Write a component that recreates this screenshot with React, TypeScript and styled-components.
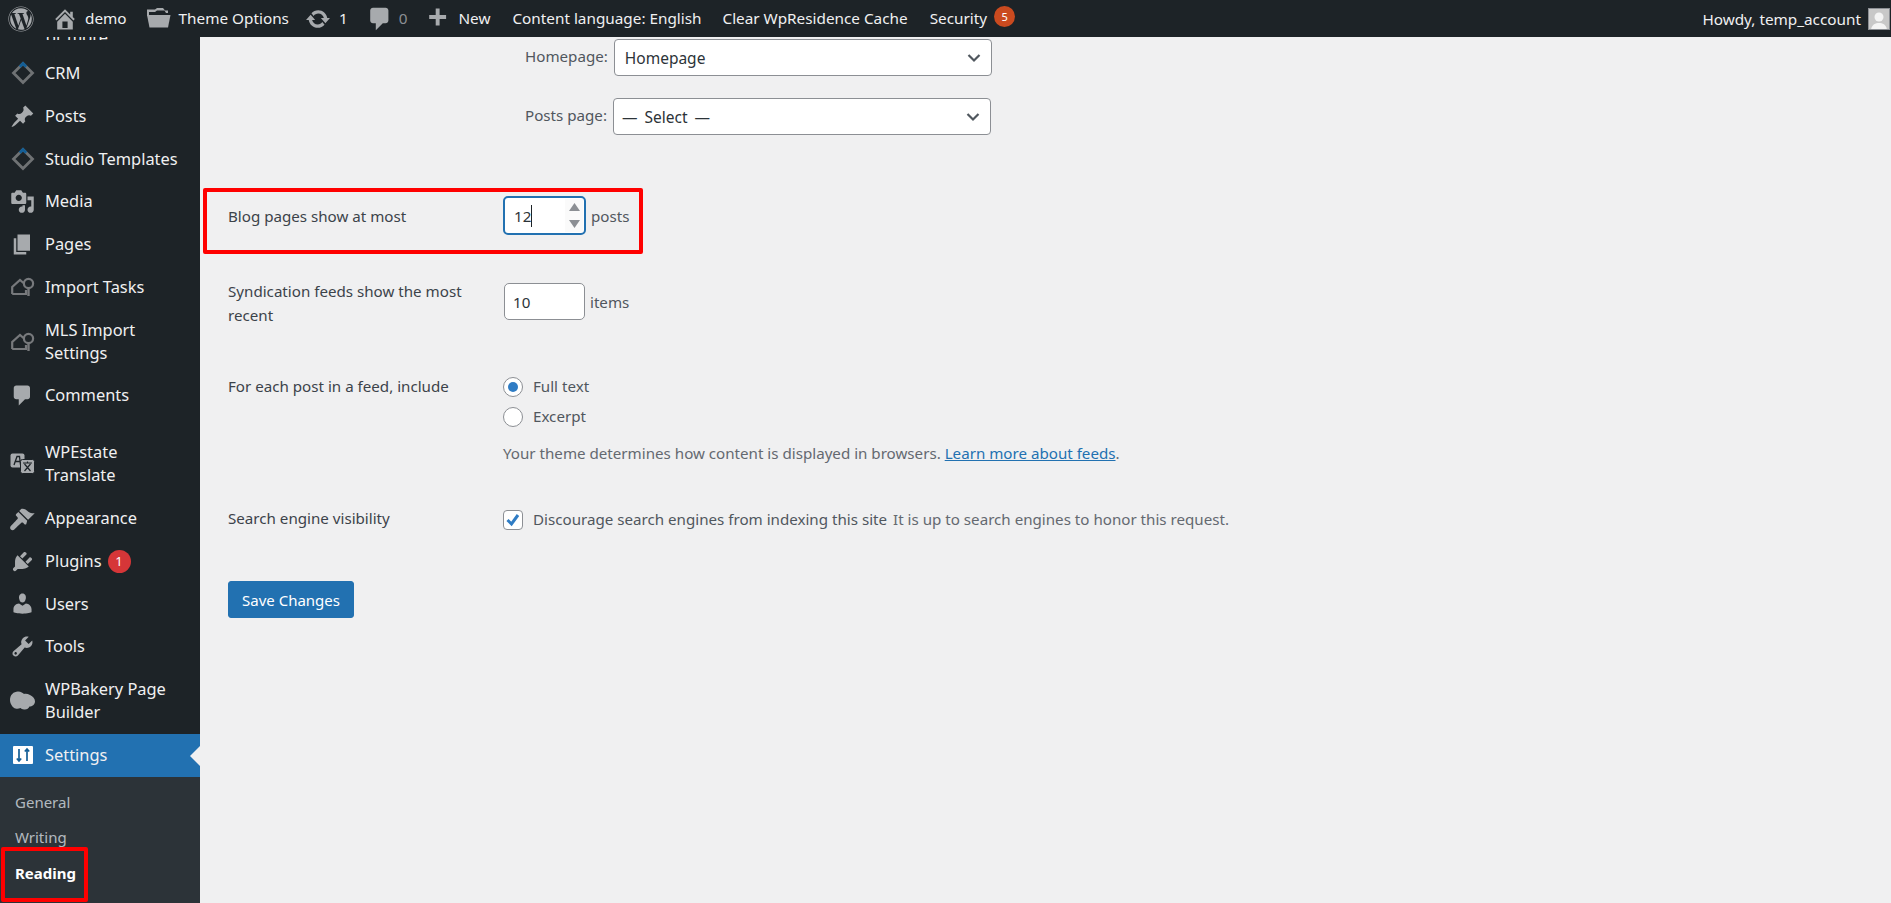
import React from 'react'
import styled, { createGlobalStyle } from 'styled-components'
import { FaWordpress } from 'react-icons/fa'

const GlobalStyle = createGlobalStyle`
  html, body { margin: 0; padding: 0; height: 100%; background: #f0f0f1; }
  body { font-family: 'Noto Sans', 'Open Sans', sans-serif; font-size: 15.15px; color: #2c3338; }
`

const Page = styled.div`
  display: flex;
  flex-direction: column;
  height: 903px;
  overflow: hidden;
`

const TopBar = styled.div`
  display: flex;
  align-items: center;
  flex: 0 0 37px;
  padding: 0 1px 0 8px;
  background: #1d2327;
  color: #f0f0f1;
`

const TopItem = styled.div<{ $gap?: number; $left?: number }>`
  display: flex;
  align-items: center;
  gap: ${({ $gap }) => $gap ?? 0}px;
  margin-left: ${({ $left }) => $left ?? 22}px;
  white-space: nowrap;
  font-size: 15.3px;
  line-height: 37px;
  svg { fill: #a7aaad; display: block; }
`

const MutedCount = styled.span`
  color: #8c8f94;
`

const SecurityBadge = styled.span`
  display: block;
  width: 21px;
  height: 21px;
  margin-top: -5px;
  border-radius: 50%;
  background: #ca4a1f;
  color: #fff;
  font-size: 11px;
  line-height: 21px;
  text-align: center;
`

const Howdy = styled.div`
  display: flex;
  align-items: center;
  gap: 7px;
  margin-left: auto;
  font-size: 15.3px;
  white-space: nowrap;
`

const Avatar = styled.div`
  width: 20px;
  height: 20px;
  border: 1px solid #8c8f94;
  background: #c8c8c8;
  overflow: hidden;
  svg { display: block; fill: #f4f4f4; }
`

const Body = styled.div`
  display: flex;
  flex: 1;
  min-height: 0;
`

const Sidebar = styled.nav`
  flex: 0 0 200px;
  background: #1d2327;
  overflow: hidden;
`

const ClippedItem = styled.div`
  height: 3px;
  margin: 0 0 12px 46px;
  overflow: hidden;
  color: #f0f0f1;
  font-size: 16.4px;
  line-height: 0;
`

const MenuItem = styled.div<{ $active?: boolean; $gapAfter?: number }>`
  display: flex;
  align-items: center;
  position: relative;
  box-sizing: border-box;
  padding: 10px 0;
  margin-bottom: ${({ $gapAfter }) => $gapAfter ?? 0}px;
  background: ${({ $active }) => ($active ? '#2271b1' : 'transparent')};
  color: #f0f0f1;
  font-size: 16.4px;
  line-height: 22.8px;
`

const IconSlot = styled.div`
  flex: 0 0 45px;
  height: 22.8px;
  display: flex;
  align-items: center;
  justify-content: center;
  svg { display: block; flex: none; fill: #a7aaad; }
`

const MenuLabel = styled.div`
  flex: 1;
  display: flex;
  align-items: center;
  gap: 6px;
  padding-right: 14px;
`

const CountBadge = styled.span`
  display: block;
  width: 23px;
  height: 23px;
  border-radius: 50%;
  background: #d63638;
  color: #fff;
  font-size: 13px;
  line-height: 23px;
  text-align: center;
`

const ActiveArrow = styled.span`
  position: absolute;
  right: 0;
  top: 12px;
  border: 10px solid transparent;
  border-right-color: #f0f0f1;
  border-left-width: 0;
`

const Submenu = styled.div`
  background: #2c3338;
  padding-top: 7px;
`

const SubItem = styled.div<{ $current?: boolean }>`
  position: relative;
  height: 35.5px;
  padding-left: 15px;
  color: ${({ $current }) => ($current ? '#fff' : 'rgba(240, 246, 252, 0.7)')};
  font-size: 15px;
  font-weight: ${({ $current }) => ($current ? 700 : 400)};
  line-height: 36px;
`

const Main = styled.main`
  flex: 1;
  min-width: 0;
  padding-left: 28px;
  background: #f0f0f1;
`

const FrontPageList = styled.div`
  display: flex;
  flex-direction: column;
  gap: 22px;
  padding: 2px 0 0 297px;
`

const SelectRow = styled.div`
  display: flex;
  align-items: center;
  gap: 6px;
  color: #50575e;
`

const SelectLabel = styled.span`
  margin-top: -3px;
`

const SelectBox = styled.div`
  display: flex;
  align-items: center;
  justify-content: space-between;
  width: 378px;
  height: 37px;
  box-sizing: border-box;
  padding: 0 9px 0 10px;
  border: 1px solid #8c8f94;
  border-radius: 4px;
  background: #fff;
  color: #2c3338;
  font-size: 15.5px;
  svg { display: block; fill: none; stroke: #50575e; stroke-width: 2.2; }
`

const SelectPlaceholder = styled.span`
  margin-left: -2px;
  word-spacing: 3px;
`

const FormRow = styled.div<{ $top: number }>`
  position: relative;
  display: grid;
  grid-template-columns: 275px 1fr;
  margin-top: ${({ $top }) => $top}px;
`

const RowLabel = styled.div<{ $top?: number }>`
  width: 240px;
  margin-top: -1px;
  padding-top: ${({ $top }) => $top ?? 0}px;
  line-height: 24px;
  color: #3c434a;
`

const RowField = styled.div<{ $top?: number }>`
  padding-top: ${({ $top }) => $top ?? 0}px;
`

const InlineField = styled.div`
  display: flex;
  align-items: center;
  gap: 5px;
  color: #50575e;
`

const NumberBox = styled.div<{ $focused?: boolean }>`
  display: flex;
  align-items: center;
  position: relative;
  width: ${({ $focused }) => ($focused ? 83 : 81)}px;
  height: ${({ $focused }) => ($focused ? 39 : 37)}px;
  margin-left: ${({ $focused }) => ($focused ? 0 : 1)}px;
  box-sizing: border-box;
  padding-left: ${({ $focused }) => ($focused ? 9 : 8)}px;
  border: ${({ $focused }) => ($focused ? '2px solid #2271b1' : '1px solid #8c8f94')};
  border-radius: 5px;
  background: #fff;
  color: #2c3338;
`

const TextCaret = styled.span`
  display: block;
  width: 1px;
  height: 22px;
  background: #1d2327;
`

const Spinner = styled.div`
  position: absolute;
  top: 1px;
  right: 1px;
  bottom: 1px;
  width: 18px;
  display: flex;
  flex-direction: column;
  align-items: center;
  justify-content: space-around;
  background: #fafafa;
  svg { display: block; fill: #8c8f94; }
`

const ChoiceRow = styled.div<{ $gapAfter?: number }>`
  display: flex;
  align-items: flex-start;
  gap: 10px;
  height: 20px;
  margin-bottom: ${({ $gapAfter }) => $gapAfter ?? 0}px;
  line-height: 18px;
  color: #50575e;
  white-space: nowrap;
`

const RadioDot = styled.span<{ $on?: boolean }>`
  flex: 0 0 20px;
  height: 20px;
  box-sizing: border-box;
  display: flex;
  align-items: center;
  justify-content: center;
  border: 1px solid #8c8f94;
  border-radius: 50%;
  background: #fff;
  &::before {
    content: '';
    display: ${({ $on }) => ($on ? 'block' : 'none')};
    width: 10px;
    height: 10px;
    border-radius: 50%;
    background: #2f7cc4;
  }
`

const CheckBox = styled.span`
  flex: 0 0 20px;
  height: 20px;
  box-sizing: border-box;
  border: 1px solid #8c8f94;
  border-radius: 4px;
  background: #fff;
  svg { display: block; fill: none; stroke: #2f7cc4; stroke-width: 3; }
`

const Description = styled.p`
  margin: 14px 0 0;
  line-height: 24px;
  color: #646970;
  white-space: nowrap;
  a { color: #2271b1; }
`

const InlineNote = styled.span`
  margin-left: -4px;
  color: #646970;
`

const SaveButton = styled.button`
  display: block;
  width: 126px;
  height: 37px;
  margin-top: 51px;
  padding: 0;
  border: 1px solid #2271b1;
  border-radius: 3px;
  background: #2271b1;
  color: #fff;
  font: inherit;
  font-size: 15px;
`

const RedFrame = styled.div`
  position: absolute;
  box-sizing: border-box;
  border: 4px solid #ff0000;
  border-radius: 2px;
  pointer-events: none;
`

const BlogFrame = styled(RedFrame)`
  top: -8px;
  left: -25px;
  width: 440px;
  height: 66px;
`

const ReadingFrame = styled(RedFrame)`
  top: -8px;
  left: 1px;
  width: 87px;
  height: 55px;
`

const Dash = ({ d, size = 25 }: { d: string; size?: number }) => (
  <svg width={size} height={size} viewBox="0 0 20 20">
    <path d={d} />
  </svg>
)

const icons = {
  home: 'M16 8.5l1.53 1.53-1.06 1.06L10 4.62l-6.47 6.47-1.06-1.06L10 2.5l4 4v-2h2v4zm-6-2.46l6 5.99V18H4v-5.97zM12 17v-5H8v5h4z',
  update:
    'M10.2 3.28c3.53 0 6.43 2.61 6.92 6h2.08l-3.5 4-3.5-4h2.32c-.45-1.97-2.21-3.45-4.32-3.45-1.45 0-2.73.71-3.54 1.78L4.95 5.66C6.23 4.2 8.11 3.28 10.2 3.28zm-.4 13.44c-3.52 0-6.43-2.61-6.92-6H.8l3.5-4c1.17 1.33 2.33 2.67 3.5 4H5.48c.45 1.97 2.21 3.45 4.32 3.45 1.45 0 2.73-.71 3.54-1.78l1.71 1.95c-1.28 1.46-3.15 2.38-5.25 2.38z',
  comment: 'M5 2h9c1.1 0 2 .9 2 2v7c0 1.1-.9 2-2 2h-2l-5 5v-5H5c-1.1 0-2-.9-2-2V4c0-1.1.9-2 2-2z',
  plus: 'M17 7v3h-5v5H9v-5H4V7h5V2h3v5h5z',
  post: 'M10.44 3.02l1.82-1.82 6.36 6.35-1.83 1.82c-1.05-.68-2.48-.57-3.41.36l-.75.75c-.92.93-1.04 2.35-.35 3.41l-1.83 1.82-2.41-2.41-2.8 2.79c-.42.42-3.38 2.71-3.8 2.29s1.86-3.39 2.28-3.81l2.79-2.79L4.1 9.36l1.83-1.82c1.05.69 2.48.57 3.4-.36l.75-.75c.93-.92 1.05-2.35.36-3.41z',
  media:
    'M13 11V4c0-.55-.45-1-1-1h-1.67L9 1H5L3.67 3H2c-.55 0-1 .45-1 1v7c0 .55.45 1 1 1h10c.55 0 1-.45 1-1zM7 4.5c1.38 0 2.5 1.12 2.5 2.5S8.38 9.5 7 9.5 4.5 8.38 4.5 7 5.62 4.5 7 4.5zM14 6h5v10.5c0 1.38-1.12 2.5-2.5 2.5S14 17.88 14 16.5s1.12-2.5 2.5-2.5c.17 0 .34.02.5.05V9h-3V6zm-4 8.05V13h2v3.5c0 1.38-1.12 2.5-2.5 2.5S7 17.88 7 16.5 8.12 14 9.5 14c.17 0 .34.02.5.05z',
  page: 'M6 15V2h10v13H6zm-1 1h8v2H3V5h2v11z',
  appearance:
    'M14.48 11.06L7.41 3.99l1.5-1.5c.5-.56 2.3-.47 3.51.32 1.21.8 1.43 1.28 2.91 2.1 1.18.64 2.45 1.26 4.45.85zm-.71.71L6.7 4.7 4.93 6.47c-.39.39-.39 1.02 0 1.41l1.06 1.06c.39.39.39 1.03 0 1.42-.6.6-4.8 5.1-5.3 5.6-.8.8-.8 2 0 2.8.8.8 2 .8 2.8 0 .5-.5 5-4.7 5.6-5.3.39-.39 1.02-.39 1.41 0l1.06 1.06c.39.39 1.03.39 1.42 0z',
  plugin:
    'M13.11 4.36L9.87 7.6 8 5.73l3.24-3.24c.35-.34 1.05-.2 1.56.32.52.51.66 1.21.31 1.55zm-8 1.77l.91-1.12 9.01 9.01-1.19.84c-.71.71-2.63 1.16-3.82 1.16H6.14L4.9 17.26c-.59.59-1.54.59-2.12 0-.59-.58-.59-1.53 0-2.12l1.24-1.24v-3.88c0-1.13.4-3.19 1.09-3.89zm7.26 3.97l3.24-3.24c.34-.35 1.04-.21 1.55.31.52.51.66 1.21.31 1.55l-3.24 3.25z',
  users:
    'M10 9.25c-2.27 0-2.73-3.44-2.73-3.44C7 4.02 7.82 2 9.97 2c2.16 0 2.98 2.02 2.71 3.81 0 0-.41 3.44-2.68 3.44zm0 2.57L12.72 10c2.39 0 4.52 2.33 4.52 4.53v2.49s-3.65 1.13-7.24 1.13c-3.65 0-7.24-1.13-7.24-1.13v-2.49c0-2.25 1.94-4.48 4.47-4.48z',
  tools:
    'M16.68 9.77c-1.34 1.34-3.3 1.67-4.95.99l-5.41 6.52c-.99.99-2.59.99-3.58 0s-.99-2.59 0-3.57l6.52-5.42c-.68-1.65-.35-3.61.99-4.95 1.28-1.28 3.12-1.62 4.72-1.06l-2.89 2.89 2.82 2.82 2.86-2.87c.53 1.58.18 3.39-1.08 4.67zM3.81 16.21c.4.39 1.04.39 1.43 0 .4-.4.4-1.04 0-1.43-.39-.4-1.03-.4-1.43 0-.39.39-.39 1.03 0 1.43z',
}

const FolderIcon = () => (
  <svg width={25} height={24} viewBox="0 0 25 24">
    <path d="M1 9 V2.5 H9 L11 1 H17 L19 3.5 H22 V6 H20 L18.5 3.5 H11 L9 5 H3 V9 Z" />
    <path d="M1 8 H24.5 L22 20.5 H3.5 Z" />
  </svg>
)

const DiamondIcon = () => (
  <svg width={26} height={26} viewBox="0 0 26 26">
    <path d="M13 3.5 L22.5 13 L13 22.5 L3.5 13 Z" fill="none" stroke="#6f7274" strokeWidth="2.8" />
    <path d="M9.8 6.7 L13 3.5 L16.2 6.7" fill="none" stroke="#135e96" strokeWidth="2.8" />
  </svg>
)

const HousePinIcon = () => (
  <svg width={24} height={20} viewBox="0 0 24 20">
    <path d="M1.2 17 V10 L9 3 L12.5 6 M1.2 17 H15 V13" fill="none" stroke="#77797c" strokeWidth="2.2" />
    <circle cx="17.5" cy="6.5" r="4.6" fill="none" stroke="#77797c" strokeWidth="2.2" />
    <path d="M17.5 11 V19" stroke="#77797c" strokeWidth="2.4" />
  </svg>
)

const TranslateIcon = () => (
  <svg width={25} height={21} viewBox="0 0 25 21">
    <rect x="0.5" y="0.5" width="14" height="14" rx="2" fill="#a7aaad" />
    <path d="M4 12 L7 3.5 H9.5 L10.5 12 M5 8.5 H10" fill="none" stroke="#1d2327" strokeWidth="1.3" />
    <rect x="10.5" y="6.5" width="14" height="14" rx="2" fill="#a7aaad" stroke="#1d2327" strokeWidth="1" />
    <path d="M13 10 H22 M17.5 8.5 V10 M14.5 18 L20.5 11 M20.5 18 L14.5 11" fill="none" stroke="#1d2327" strokeWidth="1.2" />
  </svg>
)

const CloudIcon = () => (
  <svg width={25} height={20} viewBox="0 0 25 20">
    <path d="M8 .5c3 0 5 1.5 6 2.5 2-.5 4 0 6 1 3 1.5 5 3.5 5 6.5 0 3-3 5-5.500 5-1 2-3 3.500-5.500 3-1.500 0-3-1-3.500-1.500-1.500.8-3.500 1-5 .5C3 17 0 13 0 9 0 4 3.500.5 8 .5z" />
  </svg>
)

const SettingsIcon = () => (
  <svg width={24} height={24} viewBox="0 0 24 24">
    <rect x="2" y="3" width="20" height="18" rx="1" fill="#fff" />
    <path d="M8 6 V18 M5.8 15.500 L8 18 L10.200 15.500 M16 6 V18 M13.800 8.500 L16 6 L18.200 8.500" fill="none" stroke="#135e96" strokeWidth="1.7" />
  </svg>
)

type SideEntry = { label: string; icon: React.ReactNode; gapAfter?: number; badge?: string }

const sideEntries: SideEntry[] = [
  { label: 'CRM', icon: <DiamondIcon /> },
  { label: 'Posts', icon: <Dash d={icons.post} /> },
  { label: 'Studio Templates', icon: <DiamondIcon /> },
  { label: 'Media', icon: <Dash d={icons.media} /> },
  { label: 'Pages', icon: <Dash d={icons.page} /> },
  { label: 'Import Tasks', icon: <HousePinIcon /> },
  { label: 'MLS Import Settings', icon: <HousePinIcon /> },
  { label: 'Comments', icon: <Dash d={icons.comment} />, gapAfter: 14 },
  { label: 'WPEstate Translate', icon: <TranslateIcon /> },
  { label: 'Appearance', icon: <Dash d={icons.appearance} /> },
  { label: 'Plugins', icon: <Dash d={icons.plugin} />, badge: '1' },
  { label: 'Users', icon: <Dash d={icons.users} /> },
  { label: 'Tools', icon: <Dash d={icons.tools} /> },
  { label: 'WPBakery Page Builder', icon: <CloudIcon /> },
]

const Chevron = () => (
  <svg width={16} height={16} viewBox="0 0 16 16">
    <path d="M2.5 5 L8 10.500 L13.500 5" />
  </svg>
)

const App = () => {
  return (
    <Page>
      <GlobalStyle />
      <TopBar>
        <TopItem $left={0}>
          <FaWordpress size={26} />
        </TopItem>
        <TopItem $gap={7} $left={18}>
          <Dash d={icons.home} size={26} />
          demo
        </TopItem>
        <TopItem $gap={8} $left={19}>
          <FolderIcon />
          Theme Options
        </TopItem>
        <TopItem $gap={8} $left={16}>
          <Dash d={icons.update} size={26} />1
        </TopItem>
        <TopItem $gap={5} $left={18}>
          <Dash d={icons.comment} size={28} />
          <MutedCount>0</MutedCount>
        </TopItem>
        <TopItem $gap={8} $left={17}>
          <Dash d={icons.plus} size={26} />
          New
        </TopItem>
        <TopItem>Content language: English</TopItem>
        <TopItem $left={21}>Clear WpResidence Cache</TopItem>
        <TopItem $gap={7}>
          Security
          <SecurityBadge>5</SecurityBadge>
        </TopItem>
        <Howdy>
          Howdy, temp_account
          <Avatar>
            <svg width={20} height={20} viewBox="0 0 20 20">
              <circle cx="10" cy="8" r="4.500" />
              <path d="M2 22c0-6 4-8 8-8s8 2 8 8z" />
            </svg>
          </Avatar>
        </Howdy>
      </TopBar>
      <Body>
        <Sidebar>
          <ClippedItem>or more</ClippedItem>
          {sideEntries.map((entry) => (
            <MenuItem key={entry.label} $gapAfter={entry.gapAfter}>
              <IconSlot>{entry.icon}</IconSlot>
              <MenuLabel>
                <span>{entry.label}</span>
                {entry.badge && <CountBadge>{entry.badge}</CountBadge>}
              </MenuLabel>
            </MenuItem>
          ))}
          <MenuItem $active>
            <IconSlot>
              <SettingsIcon />
            </IconSlot>
            <MenuLabel>Settings</MenuLabel>
            <ActiveArrow />
          </MenuItem>
          <Submenu>
            <SubItem>General</SubItem>
            <SubItem>Writing</SubItem>
            <SubItem $current>
              Reading
              <ReadingFrame />
            </SubItem>
            <SubItem>Discussion</SubItem>
          </Submenu>
        </Sidebar>
        <Main>
          <FrontPageList>
            <SelectRow>
              <SelectLabel>Homepage:</SelectLabel>
              <SelectBox>
                Homepage
                <Chevron />
              </SelectBox>
            </SelectRow>
            <SelectRow>
              <SelectLabel>Posts page:</SelectLabel>
              <SelectBox>
                <SelectPlaceholder>— Select —</SelectPlaceholder>
                <Chevron />
              </SelectBox>
            </SelectRow>
          </FrontPageList>

          <FormRow $top={61}>
            <BlogFrame />
            <RowLabel $top={9}>Blog pages show at most</RowLabel>
            <RowField>
              <InlineField>
                <NumberBox $focused>
                  12
                  <TextCaret />
                  <Spinner>
                    <svg width={11} height={8} viewBox="0 0 11 8">
                      <path d="M5.500 0 L11 8 H0 Z" />
                    </svg>
                    <svg width={11} height={8} viewBox="0 0 11 8">
                      <path d="M0 0 H11 L5.500 8 Z" />
                    </svg>
                  </Spinner>
                </NumberBox>
                posts
              </InlineField>
            </RowField>
          </FormRow>

          <FormRow $top={45}>
            <RowLabel>Syndication feeds show the most recent</RowLabel>
            <RowField $top={3}>
              <InlineField>
                <NumberBox>10</NumberBox>
                items
              </InlineField>
            </RowField>
          </FormRow>

          <FormRow $top={48}>
            <RowLabel>For each post in a feed, include</RowLabel>
            <RowField $top={2}>
              <ChoiceRow $gapAfter={10}>
                <RadioDot $on />
                Full text
              </ChoiceRow>
              <ChoiceRow>
                <RadioDot />
                Excerpt
              </ChoiceRow>
              <Description>
                Your theme determines how content is displayed in browsers.{' '}
                <a href="#feeds">Learn more about feeds</a>.
              </Description>
            </RowField>
          </FormRow>

          <FormRow $top={42}>
            <RowLabel>Search engine visibility</RowLabel>
            <RowField $top={3}>
              <ChoiceRow>
                <CheckBox>
                  <svg width={18} height={18} viewBox="0 0 18 18">
                    <path d="M3.500 9 L7.500 13 L14 4" />
                  </svg>
                </CheckBox>
                Discourage search engines from indexing this site
                <InlineNote>It is up to search engines to honor this request.</InlineNote>
              </ChoiceRow>
            </RowField>
          </FormRow>

          <SaveButton type="button">Save Changes</SaveButton>
        </Main>
      </Body>
    </Page>
  )
}

export default App
